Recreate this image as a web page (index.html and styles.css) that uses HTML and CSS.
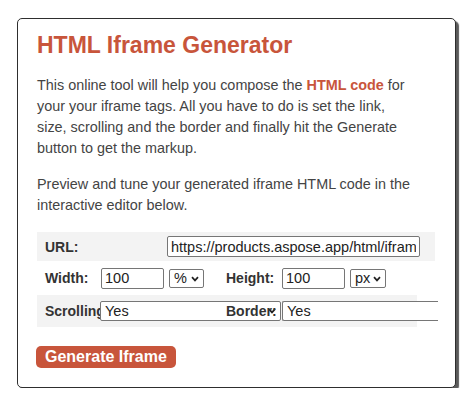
FILE: index.html
```html
<!DOCTYPE html>
<html lang="en">
<head>
<meta charset="utf-8">
<title>HTML Iframe Generator</title>
<link rel="stylesheet" href="styles.css">
</head>
<body>
<div class="card">
  <h1 class="title">HTML Iframe Generator</h1>
  <p class="text">This online tool will help you compose the <b class="accent">HTML code</b> for your your iframe tags. All you have to do is set the link, size, scrolling and the border and finally hit the Generate button to get the markup.</p>
  <p class="text">Preview and tune your generated iframe HTML code in the interactive editor below.</p>
  <div class="form">
    <div class="row row-url">
      <label class="lbl lbl-url">URL:</label>
      <input class="field field-url" type="text" value="https://products.aspose.app/html/iframe-generator">
    </div>
    <div class="row row-size">
      <label class="lbl lbl-short">Width:</label>
      <input class="field field-num" type="text" value="100">
      <span class="sel sel-unit">
        <select class="pick pick-unit"><option>%</option><option>px</option></select>
        <svg class="chev" width="8" height="6" viewBox="0 0 8 6"><path d="M1 1.2 L4 4.4 L7 1.2" fill="none" stroke="#222" stroke-width="1.7"/></svg>
      </span>
      <label class="lbl lbl-short lbl-height">Height:</label>
      <input class="field field-num" type="text" value="100">
      <span class="sel sel-unit">
        <select class="pick pick-unit pick-px"><option>px</option><option>%</option></select>
        <svg class="chev" width="8" height="6" viewBox="0 0 8 6"><path d="M1 1.2 L4 4.4 L7 1.2" fill="none" stroke="#222" stroke-width="1.7"/></svg>
      </span>
    </div>
    <div class="row row-opts">
      <label class="lbl lbl-short lbl-clip">Scrolling:</label>
      <span class="sel">
        <select class="pick pick-wide"><option>Yes</option><option>No</option></select>
        <svg class="chev" width="8" height="6" viewBox="0 0 8 6"><path d="M1 1.2 L4 4.4 L7 1.2" fill="none" stroke="#222" stroke-width="1.7"/></svg>
      </span>
      <label class="lbl lbl-short lbl-over">Border:</label>
      <span class="sel">
        <select class="pick pick-wide pick-open"><option>Yes</option><option>No</option></select>
        <svg class="chev" width="8" height="6" viewBox="0 0 8 6"><path d="M1 1.2 L4 4.4 L7 1.2" fill="none" stroke="#222" stroke-width="1.7"/></svg>
      </span>
    </div>
  </div>
  <button class="btn" type="button">Generate Iframe</button>
</div>
</body>
</html>
```

FILE: styles.css
```css
* { box-sizing: border-box; }
html, body { margin: 0; padding: 0; background: #ffffff; }
body { font-family: "Liberation Sans", Arial, sans-serif; }

.card {
  margin: 18px 0 0 17px;
  width: 439px;
  height: 370px;
  border: 1px solid #2e2e2e;
  border-radius: 5px;
  box-shadow: 3px 3px 1px #5a5a5a;
  padding: 13px 18px 0 19px;
  background: #fff;
}

.title {
  margin: 0;
  font-size: 23px;
  font-weight: bold;
  color: #c8553b;
  line-height: 26px;
}

.text {
  margin: 17px 0 0;
  width: 377px;
  font-size: 14.4px;
  line-height: 21px;
  color: #444;
}
.text + .text { margin-top: 15px; }
.accent { color: #c8553b; }

.form {
  margin-top: 16px;
  width: 401px;
  overflow: hidden;
}

.row {
  display: flex;
  align-items: center;
  padding-left: 8px;
}
.row > * { flex-shrink: 0; }
.row-url { height: 29px; width: 398px; background: #f3f3f3; }
.row-size { height: 34px; }
.row-opts { height: 32px; width: 380px; background: #f3f3f3; }

.lbl {
  font-size: 14px;
  font-weight: bold;
  color: #333;
  white-space: nowrap;
}
.lbl-url { width: 122px; }
.lbl-short { width: 56px; }
.lbl-height { margin-left: 22px; }
.lbl-clip { width: 55px; overflow: hidden; }
.lbl-over { margin-left: -55px; position: relative; z-index: 1; }

.field {
  height: 21px;
  border: 1px solid #767676;
  border-radius: 2px;
  padding: 0 3px;
  font-family: "Liberation Sans", Arial, sans-serif;
  font-size: 14.5px;
  color: #222;
  background: #fff;
}
.field-url { width: 253px; }
.field-num { width: 63px; }

.sel {
  position: relative;
  display: inline-flex;
}
.sel-unit { margin-left: 5px; }
.chev {
  position: absolute;
  right: 5px;
  top: 7px;
  pointer-events: none;
}

.pick {
  -webkit-appearance: none;
  appearance: none;
  height: 19px;
  border: 1px solid #767676;
  border-radius: 2px;
  font-family: "Liberation Sans", Arial, sans-serif;
  font-size: 14.5px;
  line-height: 17px;
  color: #222;
  background: #fff;
  padding: 0 0 0 4px;
}
.pick-unit { width: 35px; }
.pick-px { width: 36px; }
.pick-wide { width: 181px; height: 20px; }
.pick-open { width: 220px; border-right: none; }

.btn {
  margin-top: 19px;
  margin-left: -1px;
  display: block;
  height: 22px;
  padding: 0 9px;
  border: none;
  border-radius: 5px;
  background: #c8553b;
  color: #fff;
  font-family: "Liberation Sans", Arial, sans-serif;
  font-size: 16px;
  font-weight: bold;
  line-height: 22px;
}
```
